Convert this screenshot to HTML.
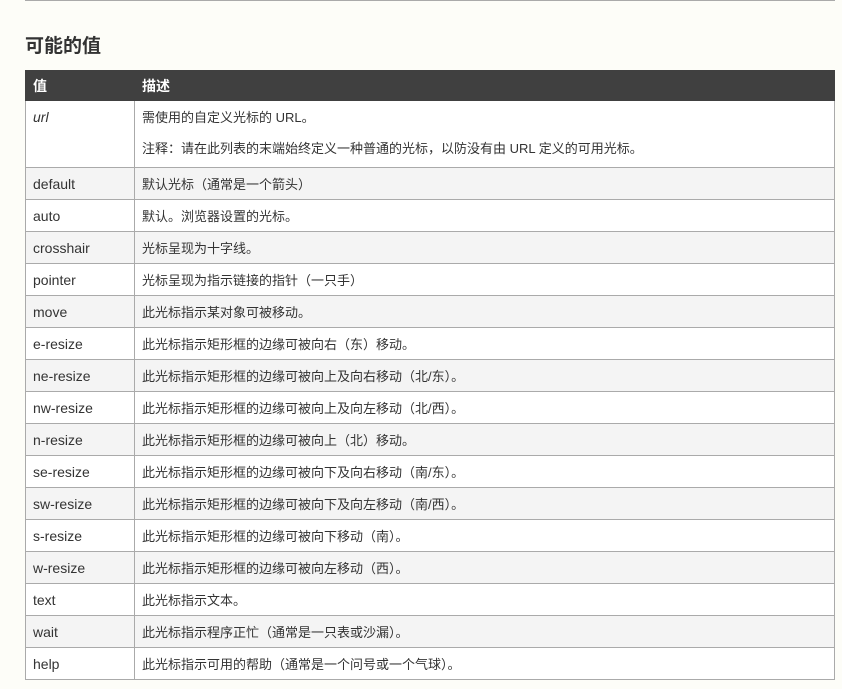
<!DOCTYPE html>
<html><head><meta charset="utf-8"><style>
body{margin:0;background:#fdfdf8;width:842px;height:689px;overflow:hidden;font-family:"Liberation Sans","Noto Sans CJK SC",sans-serif;color:#333}
.top{position:absolute;left:25px;top:0;width:810px;height:1px;background:#aaa}
h2{position:absolute;left:25px;top:35px;margin:0;font-size:19px;font-weight:bold;line-height:24px;color:#333}
table{position:absolute;left:25px;top:70px;width:810px;border-collapse:collapse;font-size:14px}
th{background:#404040;color:#fff;text-align:left;height:29px;padding:0 0 0 7px;font-size:14px;border:1px solid #404040}
td{border:1px solid #aaa;height:31px;padding:0 0 0 7px;vertical-align:middle;background:#fff}
td+td{font-size:13px}
tr.g td{background:#f4f4f4}
td:first-child{width:101px}
.url td{vertical-align:top;padding-top:8px;height:58px;line-height:17px}
.url p{margin:0 0 14px}
.url p+p{margin:0}
</style></head><body>
<div class="top"></div>
<h2>可能的值</h2>
<table>
<tr><th>值</th><th>描述</th></tr>
<tr class="url"><td><i>url</i></td><td><p>需使用的自定义光标的 URL。</p><p>注释：请在此列表的末端始终定义一种普通的光标，以防没有由 URL 定义的可用光标。</p></td></tr>
<tr class="g"><td>default</td><td>默认光标（通常是一个箭头）</td></tr>
<tr><td>auto</td><td>默认。浏览器设置的光标。</td></tr>
<tr class="g"><td>crosshair</td><td>光标呈现为十字线。</td></tr>
<tr><td>pointer</td><td>光标呈现为指示链接的指针（一只手）</td></tr>
<tr class="g"><td>move</td><td>此光标指示某对象可被移动。</td></tr>
<tr><td>e-resize</td><td>此光标指示矩形框的边缘可被向右（东）移动。</td></tr>
<tr class="g"><td>ne-resize</td><td>此光标指示矩形框的边缘可被向上及向右移动（北/东）。</td></tr>
<tr><td>nw-resize</td><td>此光标指示矩形框的边缘可被向上及向左移动（北/西）。</td></tr>
<tr class="g"><td>n-resize</td><td>此光标指示矩形框的边缘可被向上（北）移动。</td></tr>
<tr><td>se-resize</td><td>此光标指示矩形框的边缘可被向下及向右移动（南/东）。</td></tr>
<tr class="g"><td>sw-resize</td><td>此光标指示矩形框的边缘可被向下及向左移动（南/西）。</td></tr>
<tr><td>s-resize</td><td>此光标指示矩形框的边缘可被向下移动（南）。</td></tr>
<tr class="g"><td>w-resize</td><td>此光标指示矩形框的边缘可被向左移动（西）。</td></tr>
<tr><td>text</td><td>此光标指示文本。</td></tr>
<tr class="g"><td>wait</td><td>此光标指示程序正忙（通常是一只表或沙漏）。</td></tr>
<tr><td>help</td><td>此光标指示可用的帮助（通常是一个问号或一个气球）。</td></tr>
</table>
</body></html>
